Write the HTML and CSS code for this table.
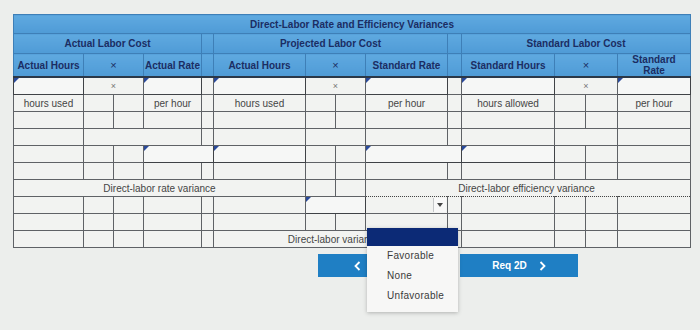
FILE: index.html
```html
<!DOCTYPE html>
<html lang="en">
<head>
  <meta charset="UTF-8" />
  <meta name="viewport" content="width=device-width, initial-scale=1" />
  <title>Direct-Labor Rate and Efficiency Variances</title>
  <link rel="stylesheet" href="styles.css">
</head>
<body>
  <div class="wrap">
    <table class="sheet">
      <colgroup>
        <col><col><col><col><col><col><col><col><col><col><col><col><col><col>
      </colgroup>
      <thead>
        <tr class="r-title">
          <th colspan="14">Direct-Labor Rate and Efficiency Variances</th>
        </tr>
        <tr class="r-group">
          <th colspan="4">Actual Labor Cost</th>
          <th class="gap"></th>
          <th colspan="4">Projected Labor Cost</th>
          <th class="gap"></th>
          <th colspan="4">Standard Labor Cost</th>
        </tr>
        <tr class="r-head">
          <th>Actual Hours</th>
          <th colspan="2" class="x">&times;</th>
          <th>Actual Rate</th>
          <th class="gap"></th>
          <th>Actual Hours</th>
          <th colspan="2" class="x">&times;</th>
          <th>Standard Rate</th>
          <th class="gap"></th>
          <th>Standard Hours</th>
          <th colspan="2" class="x">&times;</th>
          <th>Standard<br>Rate</th>
        </tr>
      </thead>
      <tbody>
        <tr>
          <td class="in"></td><td colspan="2" class="x">&times;</td><td class="in"></td>
          <td class="gap"></td>
          <td class="in"></td><td colspan="2" class="x">&times;</td><td class="in"></td>
          <td class="gap"></td>
          <td class="in"></td><td colspan="2" class="x">&times;</td><td class="in"></td>
        </tr>
        <tr>
          <td>hours used</td><td></td><td></td><td>per hour</td>
          <td class="gap"></td>
          <td>hours used</td><td></td><td></td><td>per hour</td>
          <td class="gap"></td>
          <td>hours allowed</td><td></td><td></td><td>per hour</td>
        </tr>
        <tr>
          <td></td><td></td><td></td><td></td>
          <td class="gap"></td>
          <td></td><td></td><td></td><td></td>
          <td class="gap"></td>
          <td></td><td></td><td></td><td></td>
        </tr>
        <tr>
          <td></td><td colspan="3"></td>
          <td class="gap"></td>
          <td></td><td colspan="2"></td><td></td>
          <td class="gap"></td>
          <td></td><td colspan="2"></td><td></td>
        </tr>
        <tr>
          <td></td><td></td><td></td><td colspan="2" class="in"></td>
          <td class="in"></td><td></td><td></td><td colspan="2" class="in"></td>
          <td class="in"></td><td></td><td></td><td></td>
        </tr>
        <tr>
          <td></td><td></td><td></td><td></td>
          <td class="gap"></td>
          <td></td><td></td><td></td><td></td>
          <td class="gap"></td>
          <td></td><td></td><td></td><td></td>
        </tr>
        <tr>
          <td colspan="6">Direct-labor rate variance</td>
          <td></td><td></td>
          <td colspan="6" class="eff">Direct-labor efficiency variance</td>
        </tr>
        <tr class="r-pick">
          <td></td><td></td><td></td><td></td>
          <td class="gap"></td>
          <td></td><td colspan="2" class="in"></td>
          <td class="sel dot"><div class="select"><span class="arrow"></span></div></td>
          <td class="gap dot"></td>
          <td class="dot"></td><td class="dot"></td><td class="dot"></td><td class="dot"></td>
        </tr>
        <tr>
          <td></td><td></td><td></td><td></td>
          <td class="gap"></td>
          <td></td><td></td><td></td><td></td>
          <td class="gap"></td>
          <td></td><td></td><td></td><td></td>
        </tr>
        <tr>
          <td></td><td></td><td></td><td></td>
          <td class="gap"></td>
          <td colspan="4" class="total">Direct-labor variance</td>
          <td class="gap"></td>
          <td></td><td></td><td></td><td></td>
        </tr>
      </tbody>
    </table>

    <!-- open list of the variance select -->
    <ul class="menu">
      <li class="hl"></li>
      <li>Favorable</li>
      <li>None</li>
      <li>Unfavorable</li>
    </ul>

    <div class="nav">
      <button class="btn btn-prev" aria-label="Previous">
        <svg width="7" height="10" viewBox="0 0 7 10"><polyline points="5.5,1 1.5,5 5.5,9" fill="none" stroke="#fff" stroke-width="1.8"/></svg>
      </button>
      <button class="btn">
        <span>Req 2D</span>
        <svg width="7" height="10" viewBox="0 0 7 10"><polyline points="1.5,1 5.5,5 1.5,9" fill="none" stroke="#fff" stroke-width="1.8"/></svg>
      </button>
    </div>
  </div>
</body>
</html>
```

FILE: styles.css
```css
html, body {
  margin: 0;
  background: #eceeec;
  font-family: "Liberation Sans", Arial, sans-serif;
}
body {
  padding: 14px 10px 0 13px;
}
.wrap {
  position: relative;
  width: 677px;
  padding-bottom: 50px; /* room for the open list below the buttons */
}
.sheet {
  width: 677px;
  border-collapse: collapse;
  table-layout: fixed;
  font-size: 10px;
  border: 1px solid #34506e;
}
/* column widths: three sections of four, split by narrow gaps */
.sheet col:nth-child(1) { width: 70px; }
.sheet col:nth-child(2) { width: 30px; }
.sheet col:nth-child(3) { width: 30px; }
.sheet col:nth-child(4) { width: 58px; }
.sheet col:nth-child(5) { width: 12px; }
.sheet col:nth-child(6) { width: 92px; }
.sheet col:nth-child(7) { width: 30px; }
.sheet col:nth-child(8) { width: 30px; }
.sheet col:nth-child(9) { width: 82px; }
.sheet col:nth-child(10) { width: 14px; }
.sheet col:nth-child(11) { width: 93px; }
.sheet col:nth-child(12) { width: 31px; }
.sheet col:nth-child(13) { width: 32px; }
.sheet col:nth-child(14) { width: 73px; }

.sheet th {
  background: linear-gradient(#5fa9e0, #4f9bd6);
  color: #1b2d63;
  font-weight: bold;
  border: 1px solid #3e7fb7;
  padding: 0 1px;
  text-align: center;
  line-height: 11px;
  white-space: nowrap;
}
.r-title th { height: 18px; }
.r-group th { height: 19px; }
.r-head th {
  height: 22px;
  border-bottom: 2px solid #2b3848;
}
.sheet th.x { font-weight: normal; font-size: 11px; }

.sheet td {
  position: relative;
  border: 1px solid #5f6266;
  height: 16px;
  padding: 0 3px;
  color: #454545;
  text-align: center;
  background: #f2f3f1;
  white-space: nowrap;
  overflow: hidden;
}
.sheet td.x { color: #777; font-size: 9px; }
.sheet td.in {
  background: #f6f7f6;
  border-color: #3f4246;
}
/* little marker in the corner of each entry cell */
.sheet td.in::before {
  content: "";
  position: absolute;
  top: 0;
  left: 0;
  border-top: 5px solid #2a4a9a;
  border-right: 5px solid transparent;
}
.sheet td.eff {
  border-bottom: 1px dotted #444;
  padding-left: 0;
}
.r-pick td.dot { border-top: 1px dotted #444; }
.sheet td.sel {
  padding: 0;
  border: 1px dotted #444;
}
.select {
  display: flex;
  justify-content: flex-end;
  align-items: center;
  height: 16px;
  padding-right: 1px;
}
.arrow {
  width: 12px;
  height: 14px;
  border-left: 1px solid #c5c7c9;
  background: #f8f8f8;
  display: flex;
  align-items: center;
  justify-content: center;
}
.arrow::after {
  content: "";
  border-top: 4px solid #444;
  border-left: 3px solid transparent;
  border-right: 3px solid transparent;
}
.sheet td.total { padding-left: 10px; }

.menu {
  position: absolute;
  left: 354px;
  top: 214px;
  width: 91px;
  margin: 0;
  padding: 0 0 6px;
  list-style: none;
  background: #f7f7f6;
  box-shadow: 0 1px 4px rgba(0, 0, 0, 0.25);
  z-index: 2;
}
.menu li {
  height: 20px;
  line-height: 20px;
  padding-left: 20px;
  font-size: 10px;
  color: #3a3a3a;
  letter-spacing: 0.3px;
}
.menu li.hl {
  height: 18px;
  background: #0c2a76;
}

.nav {
  display: flex;
  gap: 24px;
  margin-top: 6px;
  padding-left: 305px;
}
.btn {
  width: 118px;
  height: 23px;
  border: none;
  background: #1f7fc4;
  color: #fff;
  font-family: "Liberation Sans", Arial, sans-serif;
  font-size: 10px;
  font-weight: bold;
  display: flex;
  align-items: center;
  justify-content: center;
  gap: 12px;
  cursor: pointer;
}
.btn-prev {
  justify-content: flex-start;
  padding-left: 36px;
}
```
